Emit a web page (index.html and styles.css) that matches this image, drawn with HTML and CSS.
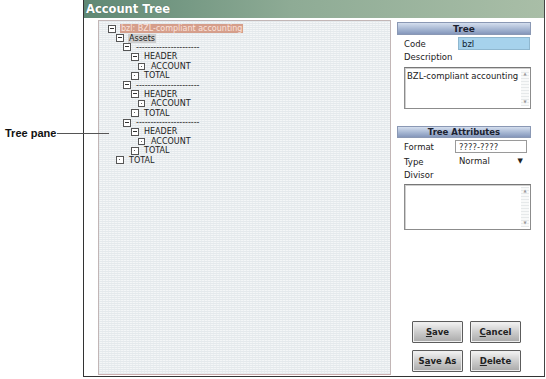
FILE: index.html
```html
<!DOCTYPE html>
<html lang="en">
<head>
    <meta charset="UTF-8">
    <title>Account Tree</title>
    <link rel="stylesheet" href="styles.css">
</head>
<body>
<div class="page">
    <div class="callout">
        <span class="callout-text">Tree pane</span>
        <span class="callout-line"></span>
    </div>

    <div class="window">
        <div class="titlebar">Account Tree</div>

        <div class="content">
            <div class="tree-pane">
                <div class="node lvl-0"><span class="box minus"></span><span class="label root">bzl: BZL-compliant accounting</span></div>
                <div class="node lvl-1"><span class="box minus"></span><span class="label current">Assets</span></div>
                <div class="node lvl-2"><span class="box minus"></span><span class="label">----------------------</span></div>
                <div class="node lvl-3"><span class="box minus"></span><span class="label">HEADER</span></div>
                <div class="node lvl-4"><span class="box leaf small"></span><span class="label">ACCOUNT</span></div>
                <div class="node lvl-3"><span class="box leaf"></span><span class="label">TOTAL</span></div>
                <div class="node lvl-2"><span class="box minus"></span><span class="label">----------------------</span></div>
                <div class="node lvl-3"><span class="box minus"></span><span class="label">HEADER</span></div>
                <div class="node lvl-4"><span class="box leaf small"></span><span class="label">ACCOUNT</span></div>
                <div class="node lvl-3"><span class="box leaf"></span><span class="label">TOTAL</span></div>
                <div class="node lvl-2"><span class="box minus"></span><span class="label">----------------------</span></div>
                <div class="node lvl-3"><span class="box minus"></span><span class="label">HEADER</span></div>
                <div class="node lvl-4"><span class="box leaf small"></span><span class="label">ACCOUNT</span></div>
                <div class="node lvl-3"><span class="box leaf"></span><span class="label">TOTAL</span></div>
                <div class="node lvl-1"><span class="box leaf"></span><span class="label">TOTAL</span></div>
            </div>

            <div class="side">
                <div class="section-head">Tree</div>
                <div class="field-row">
                    <span class="field-label">Code</span>
                    <span class="input code-input">bzl</span>
                </div>
                <div class="field-label solo">Description</div>
                <div class="textarea desc">
                    <span class="textarea-text">BZL-compliant accounting</span>
                    <span class="scroll"><i>&#9650;</i><i>&#9660;</i></span>
                </div>

                <div class="section-head attrs">Tree Attributes</div>
                <div class="field-row tight">
                    <span class="field-label">Format</span>
                    <span class="input fmt-input">????-????</span>
                </div>
                <div class="field-row tight">
                    <span class="field-label">Type</span>
                    <span class="select">Normal<b>&#9660;</b></span>
                </div>
                <div class="field-label solo">Divisor</div>
                <div class="textarea divisor">
                    <span class="textarea-text"></span>
                    <span class="scroll"><i>&#9650;</i><i>&#9660;</i></span>
                </div>

                <div class="buttons">
                    <button class="btn"><u>S</u>ave</button>
                    <button class="btn"><u>C</u>ancel</button>
                    <button class="btn">S<u>a</u>ve As</button>
                    <button class="btn"><u>D</u>elete</button>
                </div>
            </div>
        </div>
    </div>
</div>
</body>
</html>
```

FILE: styles.css
```css
body {
    margin: 0;
    background-color: #fff;
    font-family: "DejaVu Sans", Verdana, sans-serif;
    color: #222;
}

.page {
    position: relative;
    width: 546px;
    height: 379px;
    display: flex;
}

/* annotation over the window edge */
.callout {
    position: absolute;
    left: 5px;
    top: 127px;
    display: flex;
    align-items: center;
    gap: 1px;
    z-index: 2;
}

.callout-text {
    font-family: "Liberation Sans", Arial, sans-serif;
    font-weight: bold;
    font-size: 11px;
    color: #111;
}

.callout-line {
    width: 52px;
    height: 1px;
    background-color: #555;
}

.window {
    margin-left: 83px;
    width: 460px;
    height: 376px;
    border-left: 1px solid #333;
    border-right: 1px solid #444;
    border-bottom: 1px solid #333;
    display: flex;
    flex-direction: column;
}

.titlebar {
    height: 18px;
    line-height: 18px;
    padding-left: 2px;
    font-size: 11.5px;
    font-weight: bold;
    color: #fff;
    text-shadow: 0 0 1px rgba(0, 0, 0, 0.3);
    background: linear-gradient(to right, #5f8874, #8eab95 45%, #a9bea7);
}

.content {
    display: flex;
    padding: 2px 0 0 14px;
    gap: 6px;
}

.tree-pane {
    width: 291px;
    height: 350px;
    padding-top: 3px;
    box-sizing: content-box;
    border: 1px solid #c2b6b6;
    border-bottom-color: #cdb0b0;
    background-color: #f4f6f7;
    background-image:
        repeating-linear-gradient(0deg, #e4e9ec 0 1px, transparent 1px 2px),
        repeating-linear-gradient(90deg, rgba(222, 229, 233, 0.45) 0 1px, transparent 1px 3px);
}

.node {
    display: flex;
    align-items: center;
    height: 9.4px;
    font-size: 8px;
    color: #222;
    white-space: nowrap;
}

.lvl-0 { padding-left: 9px; }
.lvl-1 { padding-left: 17px; }
.lvl-2 { padding-left: 24px; }
.lvl-3 { padding-left: 32px; }
.lvl-4 { padding-left: 39px; }

.box {
    position: relative;
    width: 6px;
    height: 6px;
    border: 1px solid #555;
    background-color: #fff;
    margin-right: 4px;
    flex-shrink: 0;
}

.box.minus::after {
    content: "";
    position: absolute;
    left: 1px;
    right: 1px;
    top: 2px;
    height: 1px;
    background-color: #333;
}

.box.leaf::after {
    content: "";
    position: absolute;
    left: 2px;
    top: 2px;
    width: 1px;
    height: 1px;
    background-color: #666;
}

.box.small {
    width: 5px;
    height: 5px;
    margin-right: 5px;
}

.label {
    line-height: 9px;
    padding: 0 1px;
}

.label.root {
    background-color: #d59e8b;
    color: #fbe3dc;
}

.label.current {
    background-color: #cdcdcd;
}

.side {
    width: 134px;
    height: 352px;
    display: flex;
    flex-direction: column;
    font-size: 8.5px;
}

.section-head {
    margin-top: 2px;
    height: 13px;
    line-height: 13px;
    text-align: center;
    font-weight: bold;
    font-size: 9px;
    color: #1c2230;
    border: 1px solid #8a98b4;
    box-sizing: border-box;
    background: linear-gradient(#d4deee, #a2b3d0 60%, #8597bb);
}

.section-head.attrs {
    margin-top: 17px;
    height: 12px;
    line-height: 11px;
    font-size: 8.5px;
}

.field-row {
    display: flex;
    align-items: center;
    height: 13px;
    margin-top: 2px;
}

.field-label {
    padding-left: 7px;
    width: 54px;
    color: #222;
}

.field-row.tight .field-label {
    width: 51px;
}

.field-label.solo {
    height: 12px;
    line-height: 12px;
    margin-top: 1px;
}

.input {
    height: 13px;
    line-height: 13px;
    width: 72px;
    box-sizing: border-box;
    padding-left: 3px;
    font-size: 8.5px;
}

.code-input {
    background-color: #a6d2ec;
    border: 1px solid #8fb7cf;
    color: #123;
}

.fmt-input {
    background-color: #fff;
    border: 1px solid #9a9a9a;
    color: #333;
}

.select {
    display: flex;
    justify-content: space-between;
    width: 72px;
    box-sizing: border-box;
    padding: 0 4px;
    height: 13px;
    line-height: 13px;
    font-size: 8.5px;
}

.select b {
    font-size: 7px;
    font-weight: normal;
}

.textarea {
    margin-left: 7px;
    width: 127px;
    box-sizing: border-box;
    display: flex;
    border: 1px solid #8c8c8c;
    border-top-color: #777;
    box-shadow: inset 1px 1px 0 #cfcfcf;
    background-color: #fff;
}

.textarea.desc {
    margin-top: 4px;
    height: 42px;
}

.textarea.divisor {
    margin-top: 3px;
    height: 46px;
}

.textarea-text {
    flex: 1;
    padding: 3px 2px;
    font-size: 8.5px;
    color: #222;
}

.scroll {
    width: 8px;
    margin: 2px 1px 2px 0;
    display: flex;
    flex-direction: column;
    justify-content: space-between;
    align-items: center;
    background-image: repeating-linear-gradient(0deg, #e6e9ea 0 1px, #f8f9f9 1px 3px);
}

.scroll i {
    font-style: normal;
    font-size: 4px;
    color: #999;
    line-height: 8px;
}

.buttons {
    margin-top: auto;
    margin-left: 15px;
    display: grid;
    grid-template-columns: 51px 51px;
    grid-auto-rows: 22px;
    column-gap: 7px;
    row-gap: 7px;
}

.btn {
    margin: 0;
    padding: 0;
    font-family: "DejaVu Sans", Verdana, sans-serif;
    font-size: 8.5px;
    font-weight: bold;
    color: #222;
    border: 1px solid #5c5c5c;
    border-radius: 1px;
    background: linear-gradient(#f4f4f4, #d0d0d0 45%, #a9a9a9);
    box-shadow: inset 0 0 0 1px #eee;
}
```
